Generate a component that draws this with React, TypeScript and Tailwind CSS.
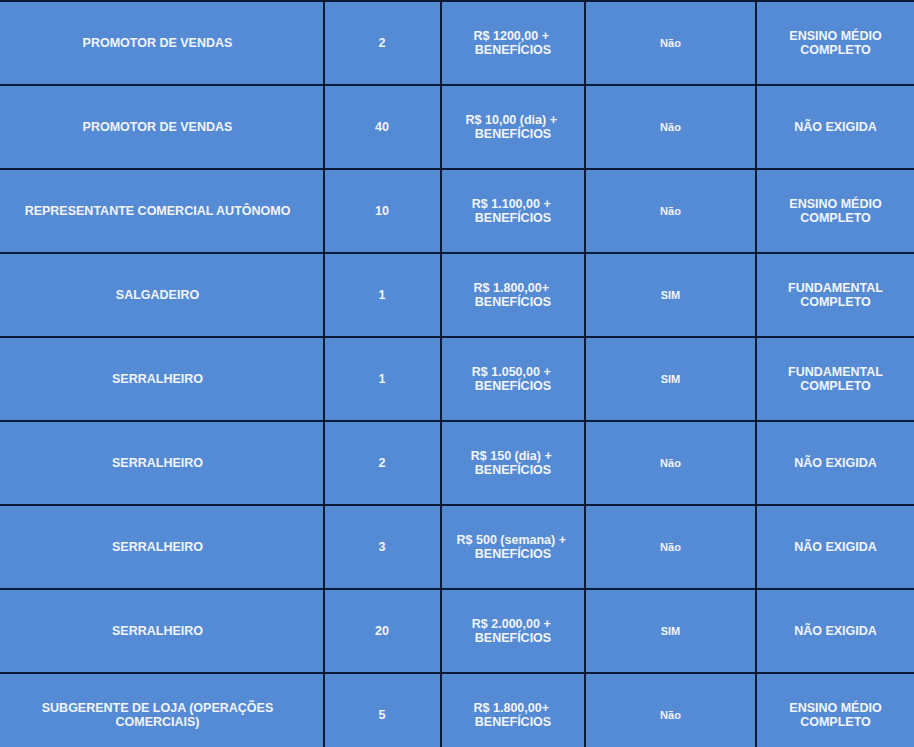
import React from "react";

type Row = {
  cargo: React.ReactNode;
  qtd: string;
  sal: [string, string];
  exp: string;
  esc: React.ReactNode;
};

const rows: Row[] = [
  { cargo: "PROMOTOR DE VENDAS", qtd: "2", sal: ["R$ 1200,00 +\u00a0", "BENEFÍCIOS"], exp: "Não", esc: <>ENSINO MÉDIO<br />COMPLETO</> },
  { cargo: "PROMOTOR DE VENDAS", qtd: "40", sal: ["R$ 10,00 (dia) +\u00a0", "BENEFÍCIOS"], exp: "Não", esc: "NÃO EXIGIDA" },
  { cargo: "REPRESENTANTE COMERCIAL AUTÔNOMO", qtd: "10", sal: ["R$ 1.100,00 +\u00a0", "BENEFÍCIOS"], exp: "Não", esc: <>ENSINO MÉDIO<br />COMPLETO</> },
  { cargo: "SALGADEIRO", qtd: "1", sal: ["R$ 1.800,00+\u00a0", "BENEFÍCIOS"], exp: "SIM", esc: <>FUNDAMENTAL<br />COMPLETO</> },
  { cargo: "SERRALHEIRO", qtd: "1", sal: ["R$ 1.050,00 +\u00a0", "BENEFÍCIOS"], exp: "SIM", esc: <>FUNDAMENTAL<br />COMPLETO</> },
  { cargo: "SERRALHEIRO", qtd: "2", sal: ["R$ 150 (dia) +\u00a0", "BENEFÍCIOS"], exp: "Não", esc: "NÃO EXIGIDA" },
  { cargo: "SERRALHEIRO", qtd: "3", sal: ["R$ 500 (semana) +\u00a0", "BENEFÍCIOS"], exp: "Não", esc: "NÃO EXIGIDA" },
  { cargo: "SERRALHEIRO", qtd: "20", sal: ["R$ 2.000,00 +\u00a0", "BENEFÍCIOS"], exp: "SIM", esc: "NÃO EXIGIDA" },
  { cargo: <>SUBGERENTE DE LOJA (OPERAÇÕES<br />COMERCIAIS)</>, qtd: "5", sal: ["R$ 1.800,00+\u00a0", "BENEFÍCIOS"], exp: "Não", esc: <>ENSINO MÉDIO<br />COMPLETO</> },
];

function Cell({ children, small, extra = "" }: { children: React.ReactNode; small?: boolean; extra?: string }) {
  return (
    <div
      className={
        "h-[82px] bg-[#558ad5] flex items-center justify-center text-center font-bold text-[#f2f5fa] " +
        (small ? "text-[11px] leading-[13px] " : "text-[12.5px] leading-[14.5px] ") +
        extra
      }
    >
      <div>{children}</div>
    </div>
  );
}

export default function App() {
  return (
    <div
      className="w-[914px] h-[747px] overflow-hidden bg-[#0c1a33]"
      style={{ fontFamily: '"Liberation Sans", Arial, sans-serif' }}
    >
      <div className="grid grid-cols-[323px_115px_142px_169px_157px] gap-[2px] pt-[2px]">
        {rows.map((r, i) => (
          <React.Fragment key={i}>
            <Cell extra="pr-[8px]">{r.cargo}</Cell>
            <Cell extra="pr-[1px]">{r.qtd}</Cell>
            <Cell>
              {r.sal[0]}
              <br />
              {r.sal[1]}
            </Cell>
            <Cell small>{r.exp}</Cell>
            <Cell>{r.esc}</Cell>
          </React.Fragment>
        ))}
      </div>
    </div>
  );
}
